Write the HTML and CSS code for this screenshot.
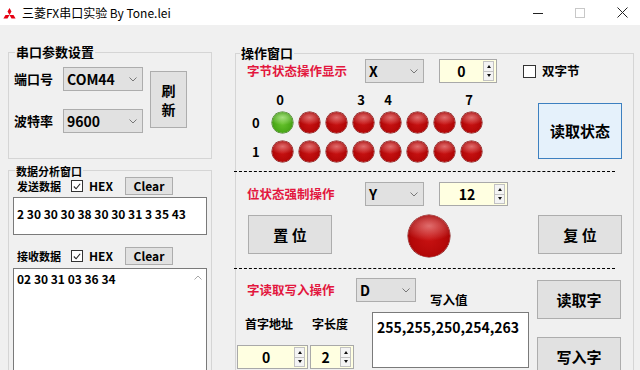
FILE: index.html
```html
<!DOCTYPE html>
<html lang="zh">
<head>
<meta charset="utf-8">
<title>三菱FX串口实验 By Tone.lei</title>
<link rel="stylesheet" href="styles.css">
</head>
<body>
<div class="window">
  <div class="titlebar">
    <svg class="logo" width="13" height="12" viewBox="0 0 13 12">
      <polygon points="6.5,0 8.5,3.5 6.5,7 4.5,3.5" fill="#e60012"/>
      <polygon points="6.5,7 2.5,7 0.4,10.6 4.5,10.6" fill="#e60012"/>
      <polygon points="6.5,7 10.5,7 12.6,10.6 8.5,10.6" fill="#e60012"/>
    </svg>
    <span class="title">三菱FX串口实验 By Tone.lei</span>
    <div class="controls">
      <svg width="10" height="10" viewBox="0 0 10 10"><line x1="0" y1="5.5" x2="10" y2="5.5" stroke="#222" stroke-width="1"/></svg>
      <svg width="10" height="10" viewBox="0 0 10 10"><rect x="0.5" y="0.5" width="9" height="9" fill="none" stroke="#c8c8c8" stroke-width="1"/></svg>
      <svg width="11" height="11" viewBox="0 0 11 11"><path d="M0.5 0.5 L10.5 10.5 M10.5 0.5 L0.5 10.5" stroke="#222" stroke-width="1"/></svg>
    </div>
  </div>

  <div class="client">
    <div class="left-col">
      <div class="group g-serial">
        <span class="legend">串口参数设置</span>
        <div class="serial-body">
          <div class="serial-fields">
            <div class="field-row">
              <span class="lbl">端口号</span>
              <div class="combo c-port"><span class="ctext">COM44</span><svg class="chev" width="8" height="5" viewBox="0 0 8 5"><polyline points="0.5,0.5 4,4 7.5,0.5" fill="none" stroke="#777" stroke-width="1"/></svg></div>
            </div>
            <div class="field-row">
              <span class="lbl">波特率</span>
              <div class="combo c-port"><span class="ctext">9600</span><svg class="chev" width="8" height="5" viewBox="0 0 8 5"><polyline points="0.5,0.5 4,4 7.5,0.5" fill="none" stroke="#777" stroke-width="1"/></svg></div>
            </div>
          </div>
          <button class="btn btn-refresh"><span class="rf">刷</span><span class="rf">新</span></button>
        </div>
      </div>

      <div class="group g-data">
        <span class="legend legend-sm">数据分析窗口</span>
        <div class="data-row">
          <span class="dlbl">发送数据</span>
          <span class="check"><svg width="11" height="11" viewBox="0 0 11 11"><polyline points="2,5.5 4.5,8 9,2.5" fill="none" stroke="#222" stroke-width="1.2"/></svg></span>
          <span class="hex">HEX</span>
          <button class="btn btn-clear">Clear</button>
        </div>
        <div class="textbox tb-send"><span class="tb-text">2 30 30 30 38 30 30 31 3 35 43</span></div>
        <div class="data-row row-recv">
          <span class="dlbl">接收数据</span>
          <span class="check"><svg width="11" height="11" viewBox="0 0 11 11"><polyline points="2,5.5 4.5,8 9,2.5" fill="none" stroke="#222" stroke-width="1.2"/></svg></span>
          <span class="hex">HEX</span>
          <button class="btn btn-clear">Clear</button>
        </div>
        <div class="textbox tb-recv">
          <span class="tb-text">02 30 31 03 36 34</span>
          <div class="scrollbar">
            <svg width="8" height="5" viewBox="0 0 8 5"><polyline points="0.5,4.5 4,1 7.5,4.5" fill="none" stroke="#a8a8a8" stroke-width="1"/></svg>
            <svg width="8" height="5" viewBox="0 0 8 5"><polyline points="0.5,0.5 4,4 7.5,0.5" fill="none" stroke="#a8a8a8" stroke-width="1"/></svg>
          </div>
        </div>
      </div>
    </div>

    <div class="right-col">
      <div class="group g-op">
        <span class="legend legend-op">操作窗口</span>

        <div class="op-row row-a">
          <span class="red-lbl">字节状态操作显示</span>
          <div class="combo c-small"><span class="ctext">X</span><svg class="chev" width="8" height="5" viewBox="0 0 8 5"><polyline points="0.5,0.5 4,4 7.5,0.5" fill="none" stroke="#777" stroke-width="1"/></svg></div>
          <div class="spin spin-a"><span class="sval">0</span><span class="sarrows"><span class="sa up"></span><span class="sa down"></span></span></div>
          <span class="check check-empty"></span>
          <span class="chk-lbl">双字节</span>
        </div>

        <div class="led-area">
          <div class="led-grid">
            <span></span>
            <span class="hd">0</span><span class="hd"></span><span class="hd"></span><span class="hd">3</span><span class="hd">4</span><span class="hd"></span><span class="hd"></span><span class="hd">7</span>
            <span class="rl">0</span>
            <span class="cell"><i class="led green"></i></span><span class="cell"><i class="led"></i></span><span class="cell"><i class="led"></i></span><span class="cell"><i class="led"></i></span><span class="cell"><i class="led"></i></span><span class="cell"><i class="led"></i></span><span class="cell"><i class="led"></i></span><span class="cell"><i class="led"></i></span>
            <span class="rl">1</span>
            <span class="cell"><i class="led"></i></span><span class="cell"><i class="led"></i></span><span class="cell"><i class="led"></i></span><span class="cell"><i class="led"></i></span><span class="cell"><i class="led"></i></span><span class="cell"><i class="led"></i></span><span class="cell"><i class="led"></i></span><span class="cell"><i class="led"></i></span>
          </div>
          <button class="btn btn-big btn-read">读取状态</button>
        </div>

        <div class="sep sep1"></div>

        <div class="op-row row-b">
          <span class="red-lbl">位状态强制操作</span>
          <div class="combo c-small"><span class="ctext">Y</span><svg class="chev" width="8" height="5" viewBox="0 0 8 5"><polyline points="0.5,0.5 4,4 7.5,0.5" fill="none" stroke="#777" stroke-width="1"/></svg></div>
          <div class="spin spin-b"><span class="sval">12</span><span class="sarrows"><span class="sa up"></span><span class="sa down"></span></span></div>
        </div>

        <div class="op-row row-c">
          <button class="btn btn-big btn-set">置 位</button>
          <i class="led led-big"></i>
          <button class="btn btn-big btn-reset">复 位</button>
        </div>

        <div class="sep sep2"></div>

        <div class="bottom">
          <div class="b-left">
            <div class="b-top">
              <span class="red-lbl red-lbl-d">字读取写入操作</span>
              <div class="combo c-d"><span class="ctext">D</span><svg class="chev" width="8" height="5" viewBox="0 0 8 5"><polyline points="0.5,0.5 4,4 7.5,0.5" fill="none" stroke="#777" stroke-width="1"/></svg></div>
              <span class="wlbl">写入值</span>
            </div>
            <div class="b-bottom">
              <div class="addr">
                <div class="addr-labels">
                  <span class="al al1">首字地址</span>
                  <span class="al">字长度</span>
                </div>
                <div class="addr-spins">
                  <div class="spin spin-c"><span class="sval">0</span><span class="sarrows"><span class="sa up"></span><span class="sa down"></span></span></div>
                  <div class="spin spin-d"><span class="sval">2</span><span class="sarrows"><span class="sa up"></span><span class="sa down"></span></span></div>
                </div>
              </div>
              <div class="textbox tb-write"><span class="tb-text">255,255,250,254,263</span></div>
            </div>
          </div>
          <div class="b-right">
            <button class="btn btn-big btn-rw">读取字</button>
            <button class="btn btn-big btn-ww">写入字</button>
          </div>
        </div>
      </div>
    </div>
  </div>
</div>
</body>
</html>
```

FILE: styles.css
```css
* { box-sizing: border-box; }
html, body { margin: 0; padding: 0; }
body {
  font-family: "Noto Sans CJK SC", "Noto Sans", sans-serif;
  color: #000;
  background: #f0f0f0;
}
.window {
  width: 640px;
  height: 370px;
  overflow: hidden;
  background: #f0f0f0;
}

/* title bar */
.titlebar {
  height: 25px;
  background: #fff;
  display: flex;
  align-items: center;
}
.logo { margin-left: 3px; margin-top: 2px; }
.title {
  margin-left: 6px;
  font-size: 12px;
  line-height: 16px;
  font-weight: 400;
}
.controls {
  margin-left: auto;
  display: flex;
  align-items: center;
  gap: 32px;
  padding-right: 12px;
}

.client {
  display: flex;
  align-items: flex-start;
}

/* group boxes */
.group {
  position: relative;
  border: 1px solid #d5d5d5;
}
.legend {
  position: absolute;
  top: -9px;
  left: 6px;
  padding: 0 1px;
  background: #f0f0f0;
  font-size: 13px;
  font-weight: 700;
  line-height: 16px;
  white-space: nowrap;
}
.legend-sm { font-size: 11px; top: -8px; }
.legend-op { left: 4px; }

.left-col {
  margin-left: 8px;
  width: 204px;
  display: flex;
  flex-direction: column;
}
.g-serial {
  margin-top: 27px;
  height: 107px;
}
.serial-body {
  display: flex;
  align-items: flex-start;
  padding: 14px 0 0 5px;
}
.serial-fields {
  display: flex;
  flex-direction: column;
  gap: 18px;
}
.field-row {
  display: flex;
  align-items: center;
  height: 24px;
}
.lbl {
  width: 49px;
  font-size: 13px;
  font-weight: 700;
  line-height: 16px;
}

/* combos */
.combo {
  display: flex;
  align-items: center;
  height: 24px;
  background: #e1e1e1;
  border: 1px solid #adadad;
  padding-left: 3px;
}
.ctext {
  font-size: 14px;
  font-weight: 700;
  line-height: 16px;
}
.chev { margin-left: auto; margin-right: 5px; }
.c-port { width: 80px; }
.c-small { width: 59px; }
.c-d { width: 60px; }

/* buttons */
.btn {
  font-family: "Noto Sans CJK SC", "Noto Sans", sans-serif;
  background: #e1e1e1;
  border: 1px solid #adadad;
  color: #000;
  font-weight: 700;
  padding: 0;
  margin: 0;
}
.btn-refresh {
  margin-left: 7px;
  margin-top: 4px;
  width: 37px;
  height: 57px;
  display: flex;
  flex-direction: column;
  align-items: center;
  justify-content: center;
  gap: 0;
  font-size: 14px;
}
.rf {
  display: block;
  line-height: 19px;
  height: 19px;
}
.btn-clear {
  width: 48px;
  height: 18px;
  font-size: 12px;
  line-height: 14px;
}
.btn-big {
  width: 84px;
  height: 39px;
  font-size: 15px;
  line-height: 18px;
}
.btn-read {
  height: 56px;
  margin-left: auto;
  margin-top: 11px;
  background: #e5f1fb;
  border-color: #3d80c0;
}

/* data group */
.g-data {
  margin-top: 11px;
  height: 215px;
  padding: 6px 4px 0 4px;
}
.data-row {
  display: flex;
  align-items: center;
  height: 18px;
  padding-left: 4px;
}
.row-recv { margin-top: 12px; }
.dlbl {
  width: 54px;
  font-size: 11px;
  font-weight: 700;
  line-height: 14px;
}
.check {
  width: 12px;
  height: 12px;
  border: 1px solid #333;
  background: #fff;
  display: flex;
  align-items: center;
  justify-content: center;
}
.check svg { display: block; }
.hex {
  margin-left: 6px;
  width: 36px;
  font-size: 12px;
  font-weight: 700;
  line-height: 14px;
}
.textbox {
  background: #fff;
  border: 1px solid #7a7a7a;
  padding: 2px 3px;
}
.tb-text {
  font-size: 12px;
  font-weight: 700;
  line-height: 16px;
}
.tb-send {
  margin-top: 2px;
  height: 38px;
}
.tb-recv {
  margin-top: 3px;
  height: 110px;
  display: flex;
  align-items: flex-start;
  padding-right: 0;
  padding-top: 2px;
}
.tb-recv .tb-text { flex: 1; }
.scrollbar {
  width: 17px;
  height: 100px;
  margin-top: 4px;
  display: flex;
  flex-direction: column;
  justify-content: space-between;
  align-items: center;
}

/* operation group */
.right-col {
  margin-left: 23px;
  width: 399px;
}
.g-op {
  margin-top: 28px;
  height: 330px;
  padding: 0 11px;
}
.op-row {
  display: flex;
  align-items: center;
}
.row-a {
  margin-top: 5px;
  height: 24px;
}
.red-lbl {
  width: 118px;
  color: #e3173e;
  font-size: 12.5px;
  font-weight: 700;
  line-height: 16px;
  white-space: nowrap;
}
.spin {
  display: flex;
  align-items: stretch;
  height: 24px;
  border: 1px solid #a9a9a9;
  background: #ffffe1;
}
.sval {
  flex: 1;
  text-align: center;
  font-size: 14px;
  font-weight: 700;
  line-height: 22px;
}
.sarrows {
  width: 11px;
  margin: 1px 2px 1px 0;
  display: flex;
  flex-direction: column;
  border: 1px solid #c2c2c2;
  background: #f4f4f4;
}
.sa {
  flex: 1;
  display: flex;
  align-items: center;
  justify-content: center;
}
.sa.up { border-bottom: 1px solid #c2c2c2; }
.sa::before {
  content: "";
  width: 0;
  height: 0;
  border-left: 2.5px solid transparent;
  border-right: 2.5px solid transparent;
}
.sa.up::before { border-bottom: 3px solid #111; }
.sa.down::before { border-top: 3px solid #111; }
.spin-a { margin-left: 15px; width: 58px; }
.check-empty { margin-left: 26px; width: 13px; height: 13px; }
.chk-lbl {
  margin-left: 6px;
  font-size: 12.5px;
  font-weight: 700;
  line-height: 16px;
}

.led-area {
  display: flex;
  align-items: flex-start;
  margin-top: 9px;
}
.led-grid {
  display: grid;
  grid-template-columns: 22px repeat(8, 27px);
  grid-template-rows: 16px 29px 29px;
}
.hd {
  text-align: center;
  padding-right: 5px;
  font-size: 13px;
  font-weight: 700;
  line-height: 16px;
}
.rl {
  padding-left: 5px;
  font-size: 13px;
  font-weight: 700;
  line-height: 29px;
}
.cell {
  display: flex;
  align-items: center;
  justify-content: center;
}
.led {
  display: block;
  width: 21px;
  height: 21px;
  border-radius: 50%;
  background:
    radial-gradient(ellipse 62% 36% at 50% 26%, rgba(255, 190, 190, 0.55), rgba(255, 120, 120, 0) 100%),
    radial-gradient(circle at 50% 55%, #c81212 0%, #b40808 55%, #820000 100%);
  box-shadow: 0 0 0 0.5px #7a0000;
}
.led.green {
  background:
    radial-gradient(ellipse 62% 36% at 50% 26%, rgba(220, 255, 190, 0.6), rgba(200, 255, 160, 0) 100%),
    radial-gradient(circle at 50% 55%, #66c22c 0%, #4aa818 55%, #2f7a0a 100%);
  box-shadow: 0 0 0 0.5px #2f6f10;
}

.sep {
  margin-left: -13px;
  width: 381px;
  border-top: 1px dashed #000;
}
.sep1 { margin-top: 5px; }
.sep2 { margin-top: 14px; }

.row-b {
  margin-top: 10px;
  height: 24px;
}
.spin-b { margin-left: 15px; width: 69px; }
.row-c {
  margin-top: 9px;
  height: 39px;
}
.btn-set { margin-left: 1px; }
.led-big {
  width: 42px;
  height: 42px;
  margin-left: 76px;
  margin-top: 3px;
}
.btn-reset { margin-left: auto; }

.bottom {
  display: flex;
  align-items: flex-start;
  margin-top: 9px;
  margin-left: -10px;
}
.b-left {
  width: 292px;
  display: flex;
  flex-direction: column;
}
.b-top {
  display: flex;
  align-items: flex-start;
  height: 30px;
}
.red-lbl-d {
  width: 119px;
  padding-left: 10px;
  line-height: 23px;
}
.wlbl {
  align-self: flex-end;
  margin-left: 14px;
  font-size: 12.5px;
  font-weight: 700;
  line-height: 16px;
}
.b-bottom {
  display: flex;
  align-items: flex-start;
}
.addr {
  width: 117px;
  display: flex;
  flex-direction: column;
}
.addr-labels {
  display: flex;
  margin-top: 8px;
  height: 16px;
  padding-left: 8px;
}
.al {
  font-size: 12px;
  font-weight: 700;
  line-height: 16px;
}
.al1 { width: 67px; }
.addr-spins {
  display: flex;
  margin-top: 13px;
}
.spin-c { width: 72px; }
.spin-d { width: 44px; margin-left: 2px; }
.tb-write {
  margin-left: 18px;
  margin-top: 4px;
  width: 158px;
  height: 56px;
  padding: 1px 4px;
}
.tb-write .tb-text {
  font-size: 14px;
  line-height: 18px;
}
.b-right {
  margin-left: 8px;
  display: flex;
  flex-direction: column;
}
.btn-rw { margin-top: 2px; }
.btn-ww { margin-top: 18px; }
```
